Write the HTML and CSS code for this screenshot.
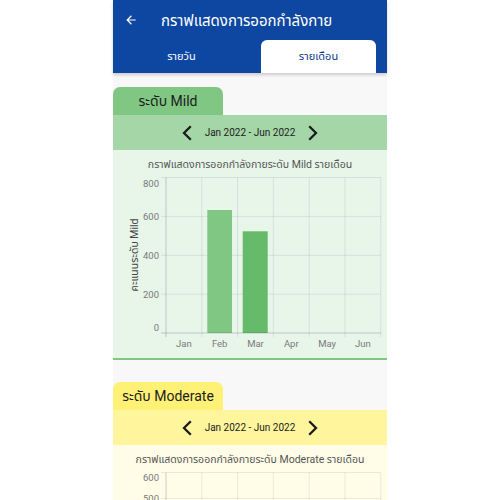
FILE: index.html
```html
<!DOCTYPE html>
<html lang="th">
<head>
<meta charset="utf-8">
<title>กราฟแสดงการออกกำลังกาย</title>
<link rel="stylesheet" href="styles.css">
</head>
<body>
<div class="app">
  <header class="appbar">
    <div class="titlebar">
      <svg class="back" viewBox="0 0 24 24" width="14" height="14"><path d="M20 11H7.83l5.59-5.59L12 4l-8 8 8 8 1.41-1.41L7.83 13H20v-2z" fill="#fff"/></svg>
      <h1 class="title">กราฟแสดงการออกกำลังกาย</h1>
    </div>
    <nav class="tabs">
      <div class="tab">รายวัน</div>
      <div class="tab active">รายเดือน</div>
    </nav>
  </header>

  <section class="level mild">
    <div class="level-tab">ระดับ Mild</div>
    <div class="range">
      <svg class="chev" viewBox="0 0 10 16" width="10" height="16"><path d="M8.8 1.2L2 8l6.8 6.8" fill="none" stroke="#1b1b1b" stroke-width="2.3"/></svg>
      <span class="range-text">Jan 2022 - Jun 2022</span>
      <svg class="chev" viewBox="0 0 10 16" width="10" height="16"><path d="M1.2 1.2L8 8l-6.8 6.8" fill="none" stroke="#1b1b1b" stroke-width="2.3"/></svg>
    </div>
    <div class="chart">
      <div class="chart-title">กราฟแสดงการออกกำลังกายระดับ Mild รายเดือน</div>
      <svg class="plot" viewBox="0 0 274 188" width="274" height="188">
        <g stroke="rgba(0,0,0,0.08)" stroke-width="1">
          <line x1="48" y1="5.5" x2="267.8" y2="5.5"/>
          <line x1="48" y1="44.4" x2="267.8" y2="44.4"/>
          <line x1="48" y1="83.3" x2="267.8" y2="83.3"/>
          <line x1="48" y1="122.2" x2="267.8" y2="122.2"/>
          <line x1="88.8" y1="5.5" x2="88.8" y2="165"/>
          <line x1="124.6" y1="5.5" x2="124.6" y2="165"/>
          <line x1="160.4" y1="5.5" x2="160.4" y2="165"/>
          <line x1="196.2" y1="5.5" x2="196.2" y2="165"/>
          <line x1="232" y1="5.5" x2="232" y2="165"/>
          <line x1="267.8" y1="5.5" x2="267.8" y2="165"/>
        </g>
        <rect x="94.3" y="38" width="24.7" height="123" fill="#81c784"/>
        <rect x="129.7" y="59.3" width="25" height="101.7" fill="#66bb6a"/>
        <g stroke="rgba(0,0,0,0.18)" stroke-width="1">
          <line x1="53" y1="5.5" x2="53" y2="165"/>
          <line x1="48" y1="161" x2="267.8" y2="161"/>
        </g>
        <g class="ticks" text-anchor="end">
          <text x="46" y="14.5">800</text>
          <text x="46" y="48.3">600</text>
          <text x="46" y="87.2">400</text>
          <text x="46" y="126">200</text>
          <text x="46" y="159.3">0</text>
        </g>
        <g class="ticks" text-anchor="middle">
          <text x="70.9" y="174.8">Jan</text>
          <text x="106.7" y="174.8">Feb</text>
          <text x="142.5" y="174.8">Mar</text>
          <text x="178.3" y="174.8">Apr</text>
          <text x="214.1" y="174.8">May</text>
          <text x="249.9" y="174.8">Jun</text>
        </g>
        <text class="axis-title" x="0" y="0" text-anchor="middle" transform="translate(24.5 83) rotate(-90)">คะแนนระดับ Mild</text>
      </svg>
    </div>
  </section>

  <section class="level moderate">
    <div class="level-tab">ระดับ Moderate</div>
    <div class="range">
      <svg class="chev" viewBox="0 0 10 16" width="10" height="16"><path d="M8.8 1.2L2 8l6.8 6.8" fill="none" stroke="#1b1b1b" stroke-width="2.3"/></svg>
      <span class="range-text">Jan 2022 - Jun 2022</span>
      <svg class="chev" viewBox="0 0 10 16" width="10" height="16"><path d="M1.2 1.2L8 8l-6.8 6.8" fill="none" stroke="#1b1b1b" stroke-width="2.3"/></svg>
    </div>
    <div class="chart">
      <div class="chart-title">กราฟแสดงการออกกำลังกายระดับ Moderate รายเดือน</div>
      <svg class="plot" viewBox="0 0 274 188" width="274" height="188">
        <g stroke="rgba(0,0,0,0.08)" stroke-width="1">
          <line x1="48" y1="5.5" x2="267.8" y2="5.5"/>
          <line x1="48" y1="31.4" x2="267.8" y2="31.4"/>
          <line x1="48" y1="57.3" x2="267.8" y2="57.3"/>
          <line x1="48" y1="83.3" x2="267.8" y2="83.3"/>
          <line x1="48" y1="109.2" x2="267.8" y2="109.2"/>
          <line x1="48" y1="135.1" x2="267.8" y2="135.1"/>
          <line x1="88.8" y1="5.5" x2="88.8" y2="165"/>
          <line x1="124.6" y1="5.5" x2="124.6" y2="165"/>
          <line x1="160.4" y1="5.5" x2="160.4" y2="165"/>
          <line x1="196.2" y1="5.5" x2="196.2" y2="165"/>
          <line x1="232" y1="5.5" x2="232" y2="165"/>
          <line x1="267.8" y1="5.5" x2="267.8" y2="165"/>
        </g>
        <g stroke="rgba(0,0,0,0.18)" stroke-width="1">
          <line x1="53" y1="5.5" x2="53" y2="165"/>
          <line x1="48" y1="161" x2="267.8" y2="161"/>
        </g>
        <g class="ticks" text-anchor="end">
          <text x="46" y="13.5">600</text>
          <text x="46" y="35">500</text>
          <text x="46" y="60.9">400</text>
          <text x="46" y="86.9">300</text>
          <text x="46" y="112.8">200</text>
          <text x="46" y="138.7">100</text>
          <text x="46" y="159.3">0</text>
        </g>
      </svg>
    </div>
  </section>
</div>
</body>
</html>
```

FILE: styles.css
```css
html, body {
  margin: 0;
  padding: 0;
  background: #ffffff;
  height: 100%;
  overflow: hidden;
}

body {
  font-family: Roboto, "Noto Sans Thai", "Noto Sans", "DejaVu Sans", sans-serif;
  color: #212121;
}

.app {
  width: 274px;
  margin: 0 auto;
  min-height: 100vh;
  background: #f8f8f8;
}

.appbar {
  background: #0d47a1;
  box-shadow: 0 2px 3px rgba(0, 0, 0, 0.18);
  position: relative;
  z-index: 1;
}

.titlebar {
  height: 40px;
  display: flex;
  align-items: center;
  padding-left: 11px;
}

.back {
  display: block;
  flex: none;
  margin-right: 23px;
}

.title {
  margin: 0;
  font-size: 15px;
  font-weight: 400;
  color: #ffffff;
  line-height: 20px;
  padding-top: 1px;
}

.tabs {
  display: grid;
  grid-template-columns: 1fr 1fr;
  height: 33px;
}

.tab {
  margin: 0 11px;
  display: flex;
  align-items: center;
  justify-content: center;
  font-size: 11px;
  color: #ffffff;
}

.tab.active {
  background: #ffffff;
  color: #0d3a8a;
  border-radius: 6px 6px 0 0;
}

.level.mild {
  margin-top: 14px;
}

.level.moderate {
  margin-top: 22px;
}

.level-tab {
  width: 110px;
  height: 28px;
  line-height: 28px;
  text-align: center;
  font-size: 14px;
  color: #1c1c1c;
  border-radius: 7px 7px 0 0;
}

.range {
  height: 35px;
  display: flex;
  align-items: center;
  justify-content: center;
  gap: 13px;
}

.chev {
  display: block;
}

.range-text {
  font-size: 10px;
  color: #222222;
}

.chart {
  height: 210px;
  padding-top: 8px;
  box-sizing: border-box;
}

.chart-title {
  font-size: 10.5px;
  line-height: 14px;
  color: #555555;
  text-align: center;
}

.plot {
  display: block;
}

.ticks text {
  font-size: 9.5px;
  fill: #7a7a7a;
  font-family: Roboto, sans-serif;
}

.axis-title {
  font-size: 10.5px;
  fill: #444444;
}

.mild .level-tab { background: #81c784; }
.mild .range { background: #a5d6a7; }
.mild .chart {
  background: #e8f5e9;
  border-bottom: 2px solid #81c784;
}

.moderate .level-tab { background: #fff176; }
.moderate .range { background: #fff59d; }
.moderate .chart { background: #fffde7; }
```
